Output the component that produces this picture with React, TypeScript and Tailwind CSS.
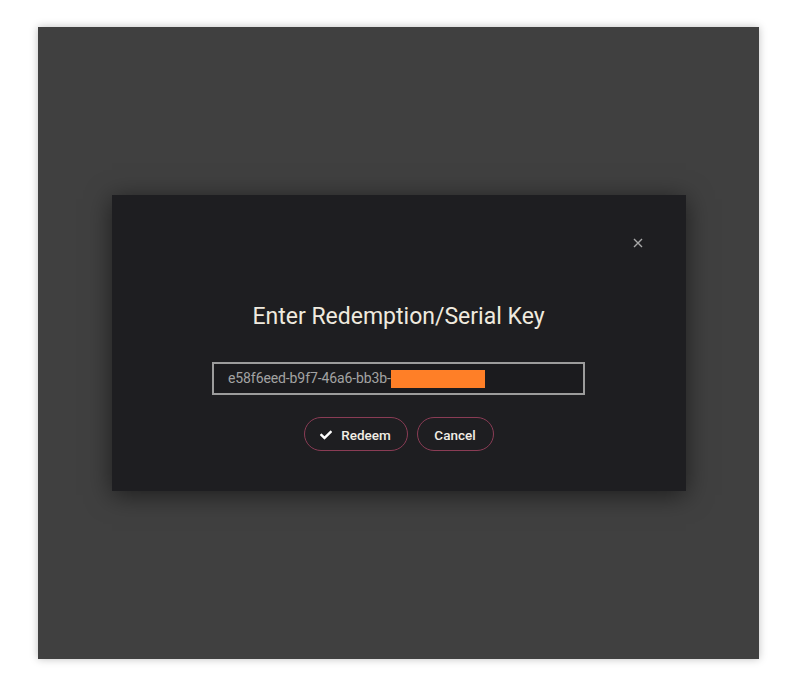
import React from "react";
import { FaCheck } from "react-icons/fa";

export default function App() {
  return (
    <div className="w-[800px] h-[694px] bg-white pt-[27px] pl-[38px]" style={{ fontFamily: "Roboto, 'Noto Sans', sans-serif" }}>
      <div className="w-[721px] h-[632px] bg-[#404040] shadow-[0_0_8px_rgba(0,0,0,0.25)] flex items-center justify-center">
        <div className="w-[574px] h-[296px] bg-[#1e1e21] shadow-[0_4px_24px_rgba(0,0,0,0.55)] flex flex-col items-center">
          <div className="w-full flex justify-end pt-[42px] pr-[42px] h-[56px]">
            <button className="w-[12px] h-[12px] flex items-center justify-center text-[#a8a8a8]">
              <svg width="10" height="10" viewBox="0 0 10 10" stroke="currentColor" strokeWidth="1.4" fill="none">
                <path d="M1 1 L9 9 M9 1 L1 9" />
              </svg>
            </button>
          </div>
          <h1 className="mt-[51px] text-[23px] leading-[30px] text-[#efeadf] tracking-[0px]">
            Enter Redemption/Serial Key
          </h1>
          <div className="mt-[30px] w-[373px] h-[33px] border-2 border-[#9c9c9c] bg-[#1b1b1e] flex items-center pl-[14px]">
            <span className="text-[14px] text-[#a3a3a3] tracking-[-0.1px]">e58f6eed-b9f7-46a6-bb3b-</span>
            <span className="w-[94px] h-[18px] bg-[#ff7f27]" />
          </div>
          <div className="mt-[22px] flex gap-[9px]">
            <button className="w-[104px] h-[34px] rounded-full border border-[#8a3c55] flex items-center justify-center gap-[9px] pt-[2px] text-[13.5px] font-medium text-[#f2eee6]">
              <FaCheck className="w-[12px] h-[12px] text-white" />
              <span>Redeem</span>
            </button>
            <button className="w-[77px] h-[34px] rounded-full border border-[#8a3c55] flex items-center justify-center pt-[2px] text-[13.5px] font-medium text-[#f2eee6]">
              Cancel
            </button>
          </div>
        </div>
      </div>
    </div>
  );
}
